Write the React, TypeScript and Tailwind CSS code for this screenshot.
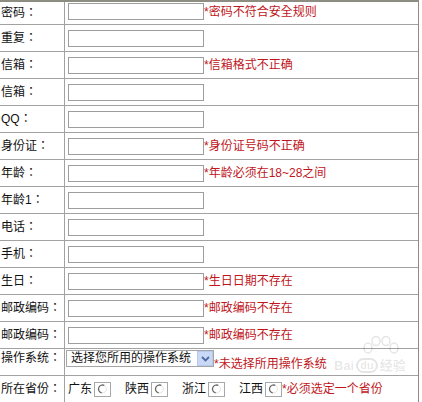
import type { ReactNode } from "react";

const font = { fontFamily: '"Liberation Sans", "Noto Sans CJK TC", sans-serif' };

function Row({
  label,
  first,
  children,
  labelClass = "items-center",
  cellClass = "items-center",
}: {
  label: string;
  first?: boolean;
  children?: ReactNode;
  labelClass?: string;
  cellClass?: string;
}) {
  return (
    <div className={`flex border-b border-[#a2a2a2] ${first ? "h-[23px]" : "h-[27px]"}`}>
      <div
        className={`flex w-[65px] shrink-0 border-r border-[#a2a2a2] pl-[1px] text-[12px] leading-[16px] whitespace-nowrap text-[#111] ${
          first ? "items-end pb-[3px]" : labelClass
        }`}
      >
        {label}
      </div>
      <div className={`flex flex-1 pl-[3px] ${first ? "items-end pb-[4px]" : cellClass}`}>{children}</div>
    </div>
  );
}

function Err({ children, className = "" }: { children: ReactNode; className?: string }) {
  return <span className={`text-[12px] leading-[16px] whitespace-nowrap text-[#c0161c] ${className}`}>{children}</span>;
}

function Field({ error }: { error?: string }) {
  return (
    <>
      <input className="h-[17px] w-[136px] shrink-0 border border-[#9d9d9d] bg-white outline-none" />
      {error && <Err>{error}</Err>}
    </>
  );
}

function Radio() {
  return (
    <svg width="17" height="15" viewBox="0 0 17 15" className="ml-[2px] mr-[14px] block shrink-0">
      <rect x="0.5" y="0.5" width="16" height="14" fill="#fff" stroke="#a8a8a8" />
      <path d="M10.5 3.54 A4 4 0 1 0 7.8 10.94" fill="none" stroke="#666" strokeWidth="1.3" />
      <path d="M7.8 10.94 A4 4 0 0 0 10.5 3.54" fill="none" stroke="#e4e4e4" strokeWidth="1" />
    </svg>
  );
}

function Province({ name }: { name: string }) {
  return (
    <>
      <span className="w-[24px] shrink-0 text-[12px] leading-[16px] text-[#111]">{name}</span>
      <Radio />
    </>
  );
}

function SelectBox() {
  return (
    <div className="-ml-[2px] flex h-[17px] w-[148px] shrink-0 items-center border border-[#a5a5a5] bg-white pl-[4px]">
      <span className="text-[12px] leading-[15px] whitespace-nowrap text-[#111]">选择您所用的操作系统</span>
      <div className="ml-auto flex h-full w-[16px] items-center justify-center border border-[#b6c9ef] bg-[#c9d8f6]">
        <svg width="9" height="6" viewBox="0 0 9 6">
          <path d="M1 1 L4.5 4.5 L8 1" fill="none" stroke="#4d6a9e" strokeWidth="1.8" />
        </svg>
      </div>
    </div>
  );
}

export default function App() {
  return (
    <div className="relative h-[402px] w-[422px] overflow-hidden bg-white" style={font}>
      <div className="w-[419px] border-t-2 border-r border-[#8d8d82]">
        <Row label="密码：" first>
          <Field error="*密码不符合安全规则" />
        </Row>
        <Row label="重复：">
          <Field />
        </Row>
        <Row label="信箱：">
          <Field error="*信箱格式不正确" />
        </Row>
        <Row label="信箱：">
          <Field />
        </Row>
        <Row label="QQ：">
          <Field />
        </Row>
        <Row label="身份证：">
          <Field error="*身份证号码不正确" />
        </Row>
        <Row label="年龄：">
          <Field error="*年龄必须在18~28之间" />
        </Row>
        <Row label="年龄1：">
          <Field />
        </Row>
        <Row label="电话：">
          <Field />
        </Row>
        <Row label="手机：">
          <Field />
        </Row>
        <Row label="生日：">
          <Field error="*生日日期不存在" />
        </Row>
        <Row label="邮政编码：">
          <Field error="*邮政编码不存在" />
        </Row>
        <Row label="邮政编码：">
          <Field error="*邮政编码不存在" />
        </Row>
        <Row label="操作系统：" labelClass="items-start pt-[1px]" cellClass="items-start pt-[1px]">
          <SelectBox />
          <Err className="mt-[6px]">*未选择所用操作系统</Err>
        </Row>
        <Row label="所在省份：">
          <Province name="广东" />
          <Province name="陕西" />
          <Province name="浙江" />
          <Province name="江西" />
          <Err className="-ml-[14px]">*必须选定一个省份</Err>
        </Row>
      </div>

      {/* faint watermark */}
      <div className="pointer-events-none absolute left-[334px] top-[336px] flex flex-col items-center">
        <svg width="40" height="22" viewBox="0 0 40 22" className="ml-[20px]">
          <g fill="none" stroke="rgba(0,0,0,0.1)" strokeWidth="1.5">
            <ellipse cx="8" cy="12" rx="4" ry="5" />
            <ellipse cx="16" cy="5" rx="4" ry="4.5" />
            <ellipse cx="26" cy="5" rx="4" ry="4.5" />
            <ellipse cx="34" cy="12" rx="4" ry="5" />
          </g>
        </svg>
        <div className="flex items-center gap-[2px] text-[13px] font-bold leading-[14px] text-[#000]/10">
          <span>Bai</span>
          <span className="rounded-full border-2 border-[#000]/10 px-[2px] text-[11px] leading-[11px]">du</span>
          <span>经验</span>
        </div>
      </div>
    </div>
  );
}
